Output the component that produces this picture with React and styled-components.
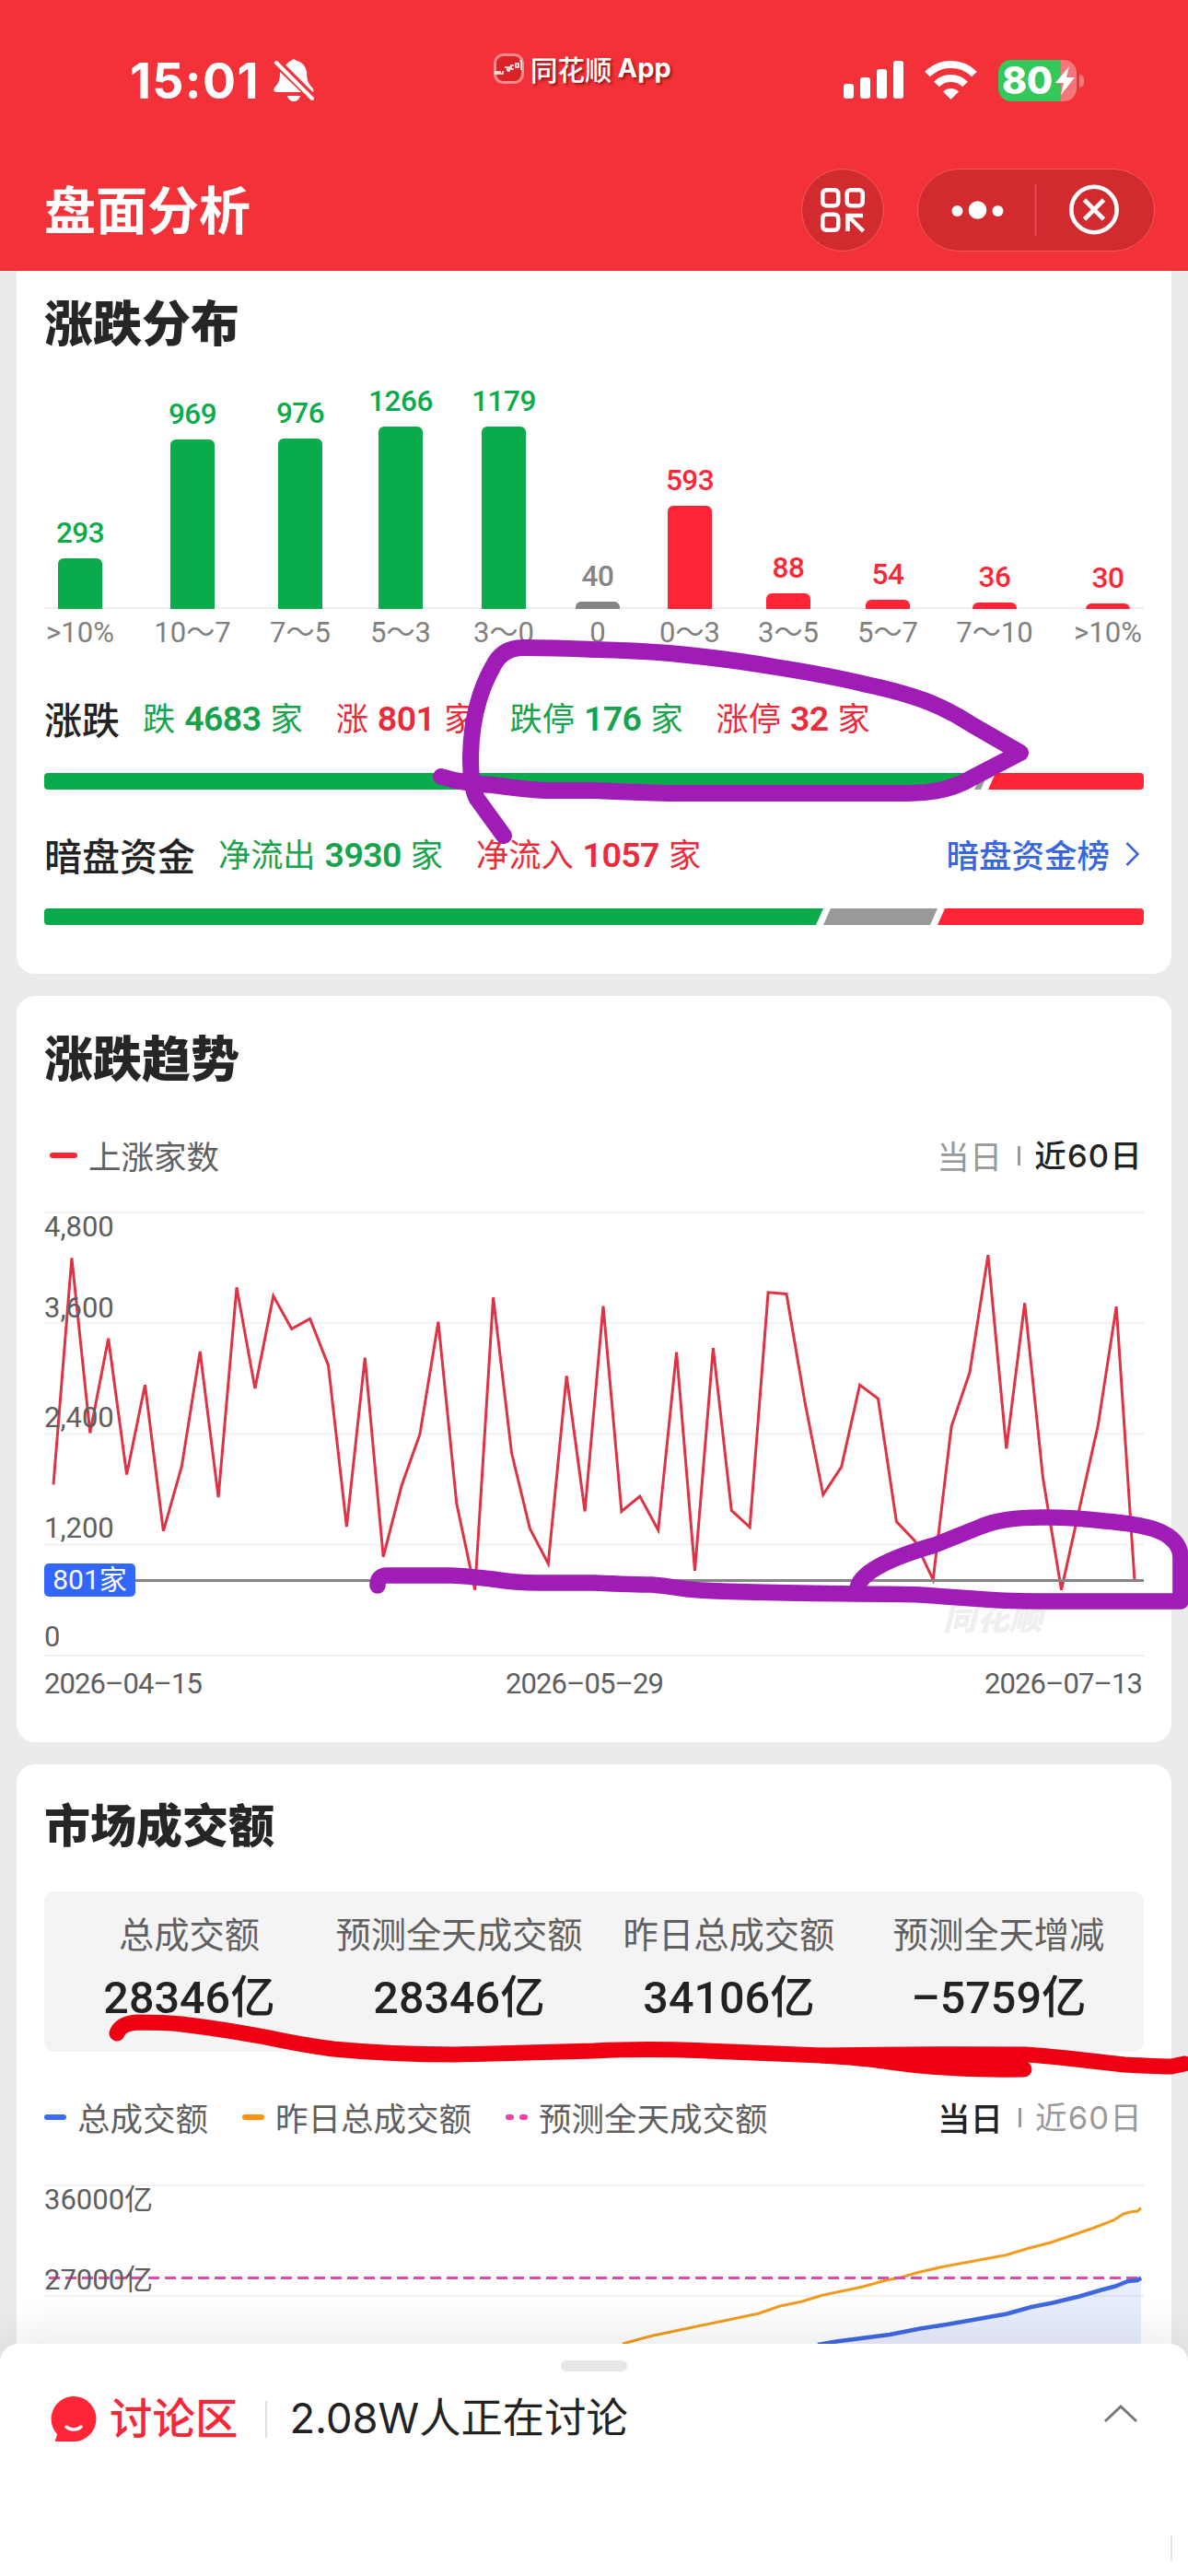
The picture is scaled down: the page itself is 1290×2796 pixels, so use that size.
import React from 'react';
import styled, { createGlobalStyle } from 'styled-components';

const GREEN = '#09ab4a';
const RED = '#ff2436';
const GREY = '#848484';

const GlobalStyle = createGlobalStyle`
    * {
        box-sizing: border-box;
    }
    body {
        margin: 0;
        background: #ebebeb;
        font-family: Roboto, 'Noto Sans CJK SC', sans-serif;
        color: #222;
    }
    svg {
        display: block;
        flex: none;
        overflow: visible;
    }
`;

const Screen = styled.div`
    position: relative;
    width: 1290px;
    height: 2796px;
    overflow: hidden;
    display: flex;
    flex-direction: column;
    background: #ebebeb;
`;

const Header = styled.header`
    height: 294px;
    flex: none;
    background: #f23238;
    color: #fff;
`;

const StatusBar = styled.div`
    height: 173px;
    padding: 57px 113px 0 141px;
    display: grid;
    grid-template-columns: 395px 1fr 261px;
    align-items: start;
`;

const Clock = styled.div`
    display: flex;
    align-items: center;
    gap: 15px;
    height: 62px;
    font: 700 53.5px/62px Inter, sans-serif;
    letter-spacing: 1.3px;
`;

const AppTag = styled.div`
    display: flex;
    align-items: center;
    gap: 7px;
    height: 48px;
    margin-top: -7px;
    font: 500 29.5px/48px 'Noto Sans CJK SC', sans-serif;
    text-shadow: 2px 2px 3px rgba(90, 0, 0, .65);
    white-space: pre;
    b {
        font: 700 29px/48px Inter, sans-serif;
        margin-left: -1px;
    }
`;

const Indicators = styled.div`
    display: flex;
    align-items: center;
    justify-content: flex-end;
    height: 60px;
    svg + svg {
        margin-left: 23px;
    }
`;

const NavBar = styled.div`
    display: flex;
    align-items: center;
    height: 110px;
    padding: 0 36px 0 48px;
    h1 {
        flex: 1;
        margin: 0;
        padding-bottom: 6px;
        font: 700 56px/80px 'Noto Sans CJK SC', sans-serif;
    }
`;

const Capsule = styled.div`
    width: ${({ $width }) => $width}px;
    height: 90px;
    margin-left: ${({ $gap }) => $gap || 0}px;
    display: flex;
    align-items: center;
    justify-content: center;
    border: 1.5px solid #f4575c;
    border-radius: 45px;
    background: #d12b2f;
`;

const Card = styled.section`
    width: 1254px;
    height: ${({ $height }) => $height}px;
    margin: 0 18px 24px;
    padding: ${({ $top }) => $top}px 30px 0;
    flex: none;
    border-radius: ${({ $first }) => ($first ? '0 0 20px 20px' : '20px')};
    background: #fff;
`;

const CardTitle = styled.h2`
    margin: 0 0 ${({ $gap }) => $gap}px;
    font: 900 ${({ $size }) => $size || 53}px/60px 'Noto Sans CJK SC', sans-serif;
    color: #262626;
`;

const Bars = styled.div`
    display: flex;
    align-items: flex-end;
    width: 1196px;
    height: 267px;
    margin-left: -1px;
    background: linear-gradient(#eee, #eee) 1px 265px / 1194px 2px no-repeat;
`;

const BarColumn = styled.div`
    width: 80px;
    margin-left: ${({ $gap }) => $gap}px;
    flex: none;
    display: flex;
    flex-direction: column;
    align-items: center;
    color: ${({ $color }) => $color};
    span {
        font-size: 31.5px;
        line-height: 36px;
        font-weight: 500;
        margin-bottom: 9px;
        letter-spacing: -.5px;
    }
`;

const Bar = styled.div`
    width: 48px;
    border-radius: 6px 6px 0 0;
    background: currentColor;
`;

const BarLabels = styled.div`
    display: flex;
    width: 1196px;
    margin-left: -1px;
    height: 90px;
    padding-top: 8px;
`;

const BarLabel = styled.div`
    width: 80px;
    margin-left: ${({ $gap }) => $gap}px;
    flex: none;
    display: flex;
    justify-content: center;
    color: #808080;
    font-size: 31px;
    line-height: 36px;
    white-space: nowrap;
`;

const StatRow = styled.div`
    display: flex;
    align-items: center;
    height: 60px;
    padding-bottom: 4px;
    strong {
        font: 500 41px/60px 'Noto Sans CJK SC', sans-serif;
        margin-right: 25px;
        color: #222;
    }
`;

const Stat = styled.span`
    margin-right: 36px;
    font: 400 35.2px/60px 'Noto Sans CJK SC', sans-serif;
    color: ${({ $down }) => ($down ? '#17a34c' : '#eb2b3c')};
    white-space: nowrap;
    b {
        margin: 0 10px;
        font: 600 37.5px/60px Roboto, sans-serif;
        letter-spacing: -.6px;
    }
`;

const StatLink = styled.a`
    display: flex;
    align-items: center;
    gap: 17px;
    margin: 0 5px 0 auto;
    font: 500 35.5px/60px 'Noto Sans CJK SC', sans-serif;
    color: #3766e0;
`;

const Track = styled.div`
    display: flex;
    height: 18px;
    margin: ${({ $margin }) => $margin};
    border-radius: 4px;
    overflow: hidden;
`;

const Segment = styled.div`
    width: ${({ $width }) => $width}px;
    background: ${({ $color }) => $color};
    clip-path: polygon(
        ${({ $start }) => ($start ? 0 : 8)}px 0,
        100% 0,
        calc(100% - ${({ $end }) => ($end ? 0 : 8)}px) 100%,
        0 100%
    );
`;

const LegendRow = styled.div`
    display: flex;
    align-items: center;
    height: 50px;
    margin-top: ${({ $top }) => $top}px;
    padding-left: ${({ $indent }) => $indent || 0}px;
    font: 400 35.5px/50px 'Noto Sans CJK SC', sans-serif;
    color: #606060;
`;

const LegendItem = styled.div`
    display: flex;
    align-items: center;
    margin-right: 37px;
    white-space: nowrap;
`;

const Dash = styled.i`
    width: ${({ $width }) => $width || 24}px;
    height: 6px;
    margin-right: 12px;
    border-radius: 3px;
    background: ${({ $color }) => $color};
`;

const Dots = styled.i`
    display: flex;
    justify-content: space-between;
    width: 24px;
    margin-right: 12px;
    &::before,
    &::after {
        content: '';
        width: 9px;
        height: 6px;
        border-radius: 3px;
        background: #ee3fa6;
    }
`;

const Toggle = styled.div`
    display: flex;
    align-items: center;
    margin: 0 1px 0 auto;
    color: #999;
    font-weight: 400;
    i {
        width: 3px;
        height: 21px;
        margin: 0 15px 0 17px;
        background: #999;
    }
    em {
        font-style: normal;
        letter-spacing: 1.2px;
        font-family: Inter, 'Noto Sans CJK SC', sans-serif;
        font-size: 34.5px;
        padding-top: 1px;
    }
    .on {
        color: #222;
        font-weight: 500;
    }
`;

const ChartBox = styled.div`
    position: relative;
    width: 1194px;
    height: ${({ $height }) => $height}px;
    margin-top: ${({ $top }) => $top}px;
`;

const AxisLabel = styled.span`
    position: absolute;
    left: 0;
    top: ${({ $y }) => $y}px;
    font-size: 31px;
    line-height: 36px;
    color: #5e5e5e;
`;

const Badge = styled.span`
    position: absolute;
    left: 0;
    top: 381px;
    width: 99px;
    height: 36px;
    border-radius: 5px;
    background: #3366ff;
    color: #fff;
    text-align: center;
    font-size: 30px;
    line-height: 36px;
`;

const Watermark = styled.span`
    position: absolute;
    left: 976px;
    top: 415px;
    font: italic 900 36px/44px 'Noto Sans CJK SC', sans-serif;
    color: #efefef;
`;

const Dates = styled.div`
    display: grid;
    grid-template-columns: 501px 520px 173px;
    margin-top: 13px;
    font-size: 31px;
    line-height: 36px;
    letter-spacing: -.9px;
    white-space: nowrap;
    color: #5e5e5e;
`;

const Summary = styled.dl`
    display: grid;
    grid-template-columns: repeat(4, 293px);
    justify-content: center;
    height: 174px;
    margin: 0;
    padding-top: 18px;
    border-radius: 12px;
    background: #f4f4f4;
    text-align: center;
    white-space: nowrap;
    dt {
        font: 400 38.3px/54px 'Noto Sans CJK SC', sans-serif;
        color: #606060;
    }
    dd {
        margin: 0;
        font-size: 48.5px;
        line-height: 88px;
        font-weight: 500;
        color: #222;
    }
`;

const Sheet = styled.footer`
    position: absolute;
    left: 0;
    right: 0;
    bottom: 0;
    height: 252px;
    padding-top: 18px;
    border-radius: 20px 20px 0 0;
    background: #fff;
    box-shadow: 0 -10px 50px rgba(0, 0, 0, .09);
`;

const Handle = styled.div`
    width: 72px;
    height: 12px;
    margin: 0 auto;
    border-radius: 6px;
    background: #e6e6e6;
`;

const Discussion = styled.div`
    display: flex;
    align-items: center;
    height: 66px;
    margin-top: 19px;
    padding: 0 55px;
    font: 400 45.3px/66px Inter, 'Noto Sans CJK SC', sans-serif;
    strong {
        margin: 0 29px 0 14px;
        padding-bottom: 2px;
        font-weight: 500;
        font-size: 46.5px;
        color: #f5283a;
    }
    i {
        width: 2px;
        height: 40px;
        margin-right: 25px;
        background: #e0e0e0;
    }
    span {
        flex: 1;
        padding-bottom: 2px;
    }
    > svg:last-child {
        margin-bottom: 12px;
    }
`;

const Corner = styled.div`
    width: 330px;
    height: 27px;
    margin: 93px 17px 0 auto;
    border-right: 2px solid #e2e2e2;
`;

const Marks = styled.svg`
    position: absolute;
    left: 0;
    top: 0;
    fill: none;
    stroke-linecap: round;
    stroke-linejoin: round;
`;

// gap = distance from the previous column
const distribution = [
    { label: '>10%', count: 293, height: 55, gap: 0, color: GREEN },
    { label: '10～7', count: 969, height: 184, gap: 42, color: GREEN },
    { label: '7～5', count: 976, height: 185, gap: 37, color: GREEN },
    { label: '5～3', count: 1266, height: 198, gap: 29, color: GREEN },
    { label: '3～0', count: 1179, height: 198, gap: 32, color: GREEN },
    { label: '0', count: 40, height: 8, gap: 22, color: GREY },
    { label: '0～3', count: 593, height: 112, gap: 20, color: RED },
    { label: '3～5', count: 88, height: 17, gap: 27, color: RED },
    { label: '5～7', count: 54, height: 10, gap: 28, color: RED },
    { label: '7～10', count: 36, height: 7, gap: 36, color: RED },
    { label: '>10%', count: 30, height: 6, gap: 43, color: RED },
];

const rising = [
    1852, 4307, 2411, 3435, 1961, 2931, 1348, 2049, 3293, 1715, 3989, 2893, 3896, 3539, 3649,
    3145, 1397, 3227, 1068, 1841, 2400, 3616, 1649, 712, 3879, 2197, 1375, 997, 3030, 1562,
    3786, 1562, 1726, 1359, 3287, 920, 3331, 1572, 1392, 3934, 3918, 2750, 1742, 2044, 2931,
    2783, 1452, 1244, 822, 2482, 3068, 4339, 2241, 3819, 1918, 712, 1605, 2493, 3781, 801,
];

const risingPoints = rising.map((v, i) => `${10 + i * 19.9},${481 - (v / 4800) * 481}`).join(' ');

const yesterday = '628,172 659,163.5 690,157 776,139 799,131 823,126 844,119.5 889,110 914,103 930,100 947,95 975,88.5 1045,75.5 1068,68.5 1093,62 1124,51.5 1140,46 1161,38 1172,31 1179,29 1187,28 1191,24.5';
const today = '840,173 860,169.5 918,162 951,155.5 980,151 1045,139.5 1072,132 1095,127.5 1124,120.5 1148,113.5 1163,109.5 1177,104 1187,103 1191,100.5';

const BellOff = _ => (
    <svg width="44" height="48" viewBox="0 0 44 48">
        <path fill="#fff" d="M12 9C14 5 16 3 19 2c1-2 5-2 6 0 6 1 10 6 11 12 0 9 2 13 6 17 3 4 1 6-2 6zM7 14l23 22H4c-4 0-5-3-2-6 4-4 5-8 5-16zM15 40h14c-1 4-4 6-7 6s-6-2-7-6z" />
        <path stroke="#f23238" strokeWidth="8" d="M4 3l41 41" />
        <path stroke="#fff" strokeWidth="4" strokeLinecap="round" d="M3 4l39 39" />
    </svg>
);

const AppLogo = _ => (
    <svg width="33" height="33" viewBox="0 0 33 33">
        <rect x="1.5" y="1.5" width="30" height="30" rx="9" fill="#db2227" stroke="#ff8a8e" strokeWidth="3" />
        <path stroke="#fff" strokeWidth="1.6" fill="none" d="M2 20h3v2H2zM7 19v3h3v-3M12 15h3v4M17 14v5h-2M22 13h-3v4h3M24 11h3v4h-3zM28 8h2v10" />
    </svg>
);

const Signal = _ => (
    <svg width="65" height="42" viewBox="0 0 65 42" fill="#fff">
        <rect x="0" y="25" width="11" height="16" rx="3" />
        <rect x="18" y="18" width="11" height="23" rx="3" />
        <rect x="36" y="9" width="11" height="32" rx="3" />
        <rect x="54" y="0" width="11" height="41" rx="3" />
    </svg>
);

const Wifi = _ => (
    <svg width="57" height="42" viewBox="0 0 57 42" fill="none" stroke="#fff" strokeWidth="8">
        <path d="M3 14.5a36.5 36.5 0 0 1 51 0" />
        <path d="M13 25.5a22 22 0 0 1 31 0" />
        <path d="M28.5 42l-8.5-8.5a12 12 0 0 1 17 0z" fill="#fff" stroke="none" />
    </svg>
);

const BatteryBody = styled.div`
    position: relative;
    width: 85px;
    height: 45px;
    margin: 0 8px 0 23px;
    display: flex;
    align-items: center;
    padding-left: 4px;
    border-radius: 14px;
    background: linear-gradient(90deg, #34c759 68px, #f5777b 68px);
    font: 800 41px/50px Inter, sans-serif;
    letter-spacing: -.5px;
    &::after {
        content: '';
        position: absolute;
        left: 88px;
        top: 16px;
        width: 5px;
        height: 14px;
        border-radius: 0 7px 7px 0;
        background: #f5777b;
    }
    svg {
        position: absolute;
        left: 62px;
        top: 7px;
    }
`;

const Battery = _ => (
    <BatteryBody>
        80
        <svg width="21" height="31" viewBox="0 0 21 31">
            <path fill="#fff" stroke="#f5777b" strokeWidth="1" paintOrder="stroke" d="M15 0L0 18h9l-3 13 15-19h-9z" />
        </svg>
    </BatteryBody>
);

const ScanCode = _ => (
    <svg width="48" height="48" viewBox="0 0 48 48" fill="none" stroke="#fff" strokeWidth="4.5">
        <rect x="2.25" y="2.25" width="17" height="17" rx="4" />
        <rect x="28.75" y="2.25" width="17" height="17" rx="4" />
        <rect x="2.25" y="28.75" width="17" height="17" rx="4" />
        <path d="M29.5 47V30H46M30 30.5L46.5 47" />
    </svg>
);

const CapsuleIcons = _ => (
    <svg width="256" height="88" viewBox="0 0 256 88" fill="none" stroke="#fff">
        <g fill="#fff" stroke="none">
            <circle cx="42.5" cy="45" r="6" />
            <circle cx="64.5" cy="44" r="9.8" />
            <circle cx="86.5" cy="45" r="6" />
        </g>
        <path d="M127.5 16v56" stroke="#f05358" strokeWidth="1.5" />
        <circle cx="191" cy="43.5" r="24.7" strokeWidth="4.6" />
        <path d="M180.5 33l21 21M201.5 33l-21 21" strokeWidth="4.6" />
    </svg>
);

const ChatFace = _ => (
    <svg width="50" height="50" viewBox="0 0 50 50">
        <path fill={RED} d="M25 0a24.5 24.5 0 0 1 0 49H7c-3 0-2-2-1-4l1-4A24.5 24.5 0 0 1 25 0z" />
        <path fill="none" stroke="#fff" strokeWidth="3.5" strokeLinecap="round" d="M17 33c4 4 12 4 16 0" />
    </svg>
);

const App = _ => (
    <>
        <GlobalStyle />
        <Screen>
            <Header>
                <StatusBar>
                    <Clock>15:01<BellOff /></Clock>
                    <AppTag><AppLogo /><span>同花顺</span><b>App</b></AppTag>
                    <Indicators>
                        <Signal />
                        <Wifi />
                        <Battery />
                    </Indicators>
                </StatusBar>
                <NavBar>
                    <h1>盘面分析</h1>
                    <Capsule $width={90}><ScanCode /></Capsule>
                    <Capsule $width={258} $gap={36}><CapsuleIcons /></Capsule>
                </NavBar>
            </Header>

            <Card $first $top={24} $height={763}>
                <CardTitle $gap={16}>涨跌分布</CardTitle>
                <Bars>
                    {distribution.map((d, i) => (
                        <BarColumn key={i} $gap={d.gap} $color={d.color}>
                            <span>{d.count}</span>
                            <Bar style={{ height: d.height }} />
                        </BarColumn>
                    ))}
                </Bars>
                <BarLabels>
                    {distribution.map((d, i) => <BarLabel key={i} $gap={d.gap}>{d.label}</BarLabel>)}
                </BarLabels>
                <StatRow>
                    <strong>涨跌</strong>
                    <Stat $down>跌<b>4683</b>家</Stat>
                    <Stat>涨<b>801</b>家</Stat>
                    <Stat $down>跌停<b>176</b>家</Stat>
                    <Stat>涨停<b>32</b>家</Stat>
                </StatRow>
                <Track $margin="28px 0 42px">
                    <Segment $width={1010} $color={GREEN} $start />
                    <Segment $width={15} $color="#999" />
                    <Segment $width={169} $color={RED} $end />
                </Track>
                <StatRow>
                    <strong>暗盘资金</strong>
                    <Stat $down>净流出<b>3930</b>家</Stat>
                    <Stat>净流入<b>1057</b>家</Stat>
                    <StatLink>
                        暗盘资金榜
                        <svg width="15" height="26" viewBox="0 0 15 26" fill="none" stroke="#3766e0" strokeWidth="2.5">
                            <path d="M1.5 1l12 12-12 12" />
                        </svg>
                    </StatLink>
                </StatRow>
                <Track $margin="27px 0 0">
                    <Segment $width={846} $color={GREEN} $start />
                    <Segment $width={124} $color="#999" />
                    <Segment $width={224} $color={RED} $end />
                </Track>
            </Card>

            <Card $top={35} $height={810}>
                <CardTitle $gap={0}>涨跌趋势</CardTitle>
                <LegendRow $top={53} $indent={6}>
                    <LegendItem><Dash $width={30} $color={RED} />上涨家数</LegendItem>
                    <Toggle><span>当日</span><i /><em className="on">近60日</em></Toggle>
                </LegendRow>
                <ChartBox $height={481} $top={37}>
                    <AxisLabel $y={-2}>4,800</AxisLabel>
                    <AxisLabel $y={86}>3,600</AxisLabel>
                    <AxisLabel $y={205}>2,400</AxisLabel>
                    <AxisLabel $y={325}>1,200</AxisLabel>
                    <AxisLabel $y={443}>0</AxisLabel>
                    <Watermark>同花顺</Watermark>
                    <svg width="1194" height="481" viewBox="0 0 1194 481" fill="none">
                        <path stroke="#f1f1f1" strokeWidth="2" d="M0 0h1194M0 120h1194M0 240.5h1194M0 360.5h1194M0 481h1194" />
                        <polyline stroke="#de3344" strokeWidth="3" points={risingPoints} />
                        <path stroke="#858585" strokeWidth="3" d="M99 399.5h1095" />
                    </svg>
                    <Badge>801家</Badge>
                </ChartBox>
                <Dates>
                    <span>2026–04–15</span>
                    <span>2026–05–29</span>
                    <span>2026–07–13</span>
                </Dates>
            </Card>

            <Card $top={33} $height={900}>
                <CardTitle $size={50} $gap={45}>市场成交额</CardTitle>
                <Summary>
                    <div><dt>总成交额</dt><dd>28346亿</dd></div>
                    <div><dt>预测全天成交额</dt><dd>28346亿</dd></div>
                    <div><dt>昨日总成交额</dt><dd>34106亿</dd></div>
                    <div><dt>预测全天增减</dt><dd>–5759亿</dd></div>
                </Summary>
                <LegendRow $top={46}>
                    <LegendItem><Dash $color="#3f6cf5" />总成交额</LegendItem>
                    <LegendItem><Dash $color="#ff9310" />昨日总成交额</LegendItem>
                    <LegendItem><Dots />预测全天成交额</LegendItem>
                    <Toggle><span className="on">当日</span><i /><em>近60日</em></Toggle>
                </LegendRow>
                <ChartBox $height={480} $top={49}>
                    <AxisLabel $y={-2}>36000亿</AxisLabel>
                    <AxisLabel $y={85}>27000亿</AxisLabel>
                    <svg width="1194" height="480" viewBox="0 0 1194 480" fill="none">
                        <path stroke="#f1f1f1" strokeWidth="2" d="M0 0h1194M0 120h1194" />
                        <polygon fill="#3366ff" fillOpacity=".11" points={`${today} 1191,480 840,480`} />
                        <polyline stroke="#f09c1e" strokeWidth="3" points={yesterday} />
                        <path stroke="#e548a8" strokeWidth="3" strokeDasharray="12 6" d="M5 100.5h1186" />
                        <polyline stroke="#3f68e0" strokeWidth="4.5" points={today} />
                    </svg>
                </ChartBox>
            </Card>

            <Sheet>
                <Handle />
                <Discussion>
                    <ChatFace />
                    <strong>讨论区</strong>
                    <i />
                    <span>2.08W人正在讨论</span>
                    <svg width="36" height="22" viewBox="0 0 36 22" fill="none" stroke="#777" strokeWidth="3">
                        <path d="M1 19L18 3l17 16" />
                    </svg>
                </Discussion>
                <Corner />
            </Sheet>

            {/* hand-drawn marks */}
            <Marks width="1290" height="2796" viewBox="0 0 1290 2796">
                <g stroke="#9f1cb7">
                    <path strokeWidth="18" d="M547 907L518 867Q511 855 511 821Q512 765 535 724Q545 703 568 703Q600 703 645 705Q690 706 727 709Q790 715 842 724Q900 733 941 743Q975 750 1003 760Q1030 770 1056 787L1108 817L1056 844Q1028 861 986 861H727Q690 860 645 858H592Q570 857 535 852Q505 851 479 843" />
                    <path strokeWidth="17.5" d="M410 1721Q410 1710 420 1710H489Q512 1711 535 1714Q560 1718 584 1718H645Q690 1720 707 1720C735 1722 735 1725 760 1726Q790 1728 929 1730Q980 1730 999 1731L1056 1735Q1090 1738 1126 1738H1282V1691Q1282 1670 1254 1660Q1235 1654 1200 1651Q1165 1647 1139 1647Q1090 1646 1065 1657L1015 1677Q935 1700 931 1724" />
                </g>
                <g stroke="#ee0012" strokeWidth="17">
                    <path d="M127 2207Q131 2196 150 2195Q180 2195 197 2197Q240 2202 288 2211Q330 2220 362 2224Q425 2230 494 2230L645 2226Q700 2223 768 2226L892 2231Q940 2234 966 2238Q1036 2248 1112 2246" />
                    <path d="M892 2231Q1000 2229 1114 2230Q1130 2231 1159 2234L1221 2241Q1260 2243 1272 2243L1286 2240" />
                </g>
            </Marks>
        </Screen>
    </>
);

export default App;
